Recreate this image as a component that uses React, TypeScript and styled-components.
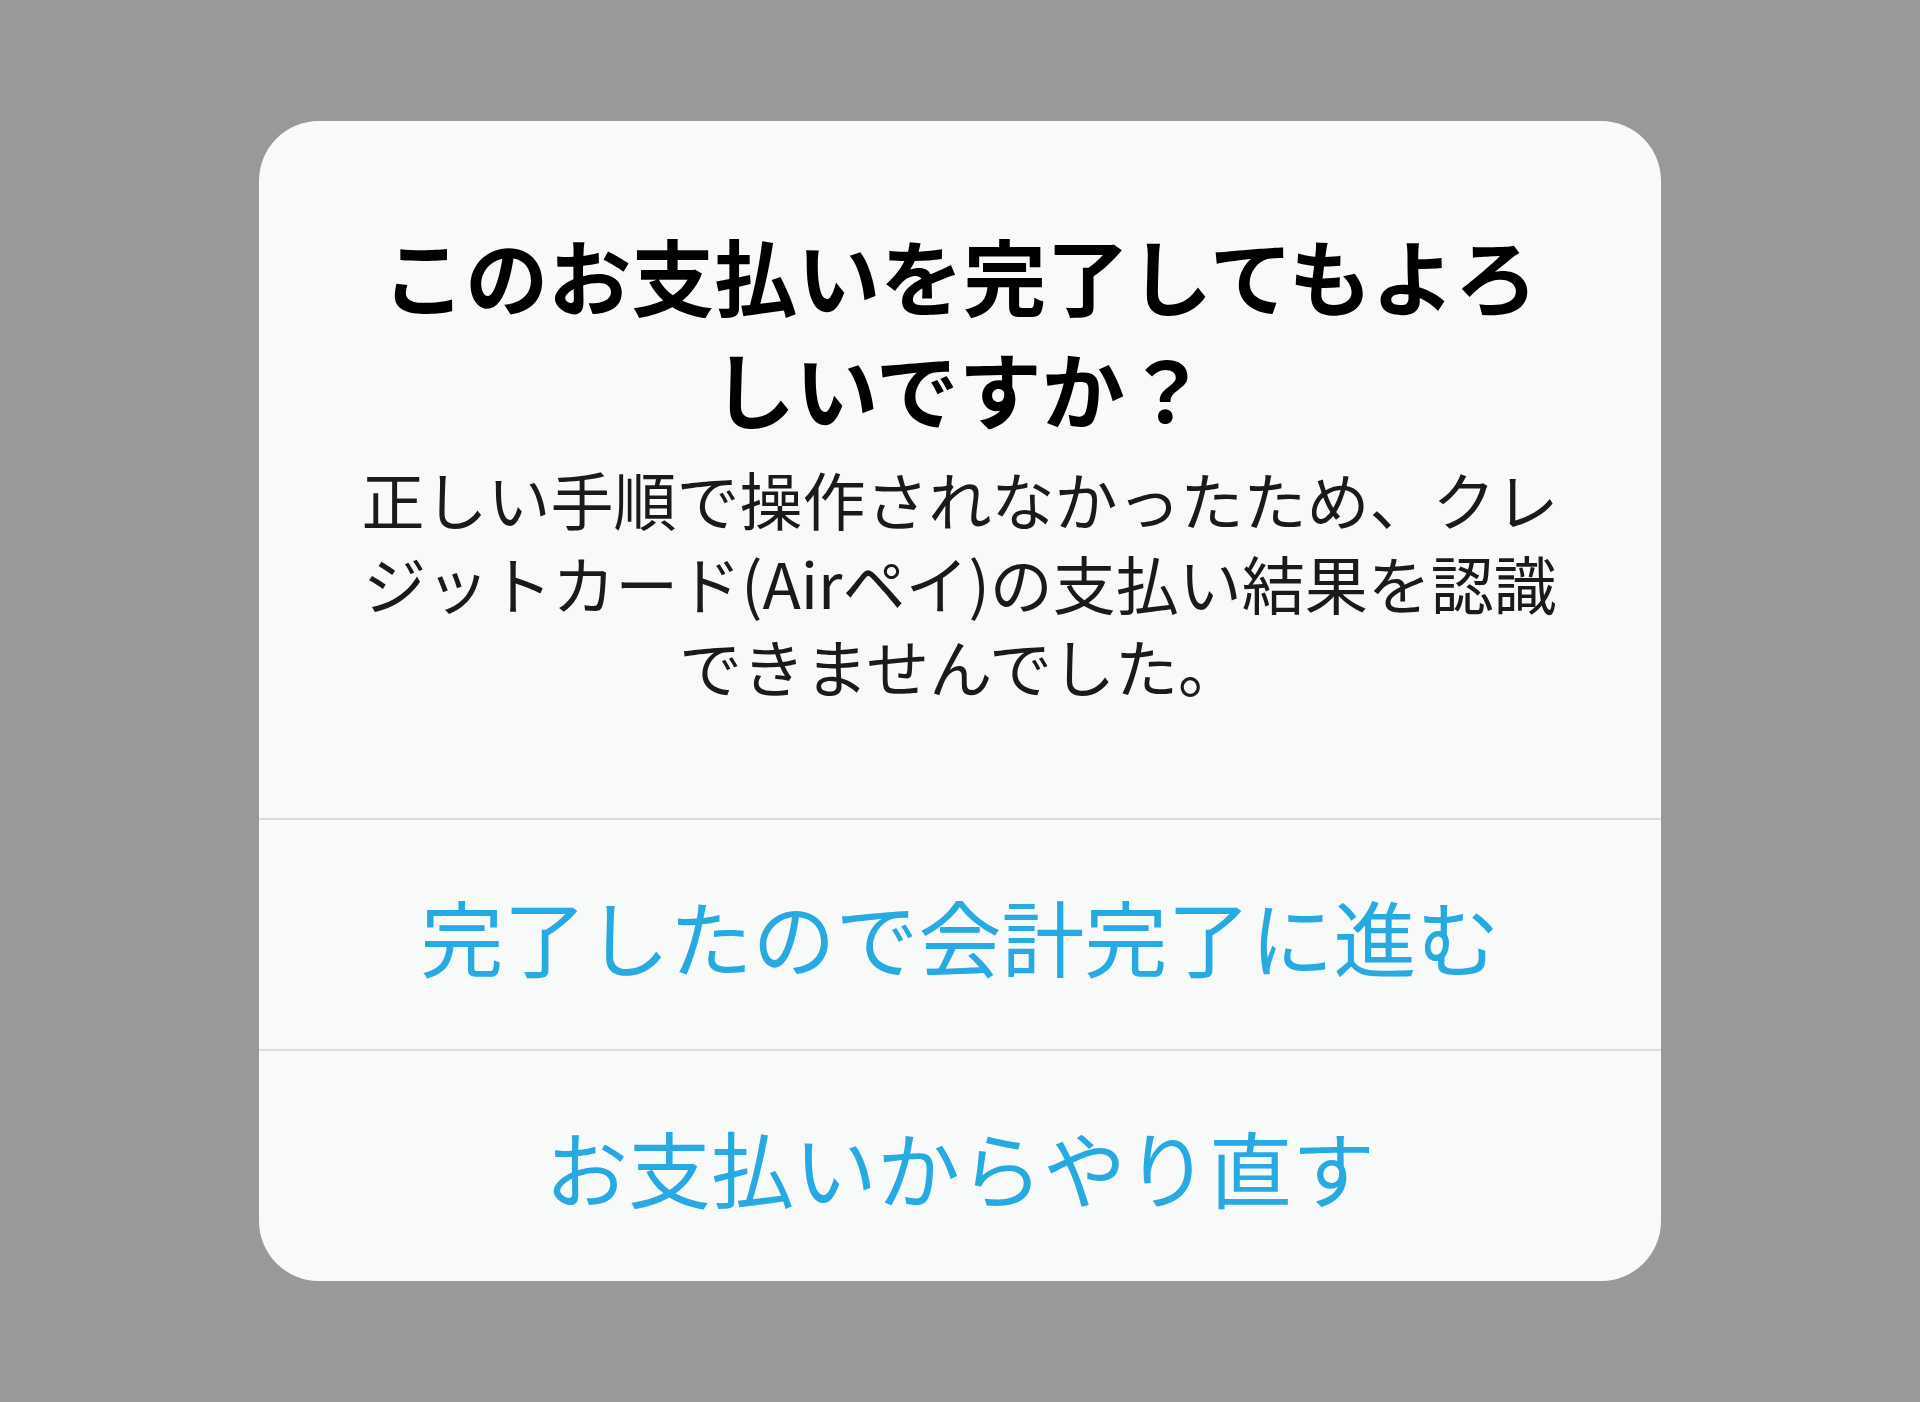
import styled, { createGlobalStyle } from 'styled-components'

const GlobalStyle = createGlobalStyle`
  html, body {
    margin: 0;
    padding: 0;
    background: #999999;
  }
  body {
    font-family: "Noto Sans CJK JP", "Noto Sans", sans-serif;
  }
`

function App() {
  return (
    <>
      <GlobalStyle />
      <Backdrop>
        <Alert role="alertdialog">
          <AlertBody>
            <Title>
              このお支払いを完了してもよろ
              <br />
              しいですか？
            </Title>
            <Message>
              正しい手順で操作されなかったため、クレ
              <br />
              ジットカード(Airペイ)の支払い結果を認識
              <br />
              できませんでした。
            </Message>
          </AlertBody>
          <ActionButton type="button">完了したので会計完了に進む</ActionButton>
          <ActionButton type="button">お支払いからやり直す</ActionButton>
        </Alert>
      </Backdrop>
    </>
  )
}

export default App

const Backdrop = styled.div`
  display: flex;
  align-items: center;
  justify-content: center;
  min-height: 100vh;
  background: #999999;
`
const Alert = styled.div`
  width: 1402px;
  height: 1160px;
  display: flex;
  flex-direction: column;
  background: #f8f9f9;
  border-radius: 60px;
  overflow: hidden;
`
const AlertBody = styled.div`
  height: 697px;
  box-sizing: border-box;
  padding: 97px 60px 0;
  display: flex;
  flex-direction: column;
  align-items: center;
  text-align: center;
`
const Title = styled.h2`
  margin: 0;
  font-size: 83px;
  font-weight: 700;
  line-height: 113px;
  color: #000000;
  white-space: nowrap;
`
const Message = styled.p`
  margin: 12px 0 0;
  font-size: 63px;
  font-weight: 400;
  line-height: 83.5px;
  color: #1a1a1a;
  white-space: nowrap;
`
const ActionButton = styled.button`
  height: 231px;
  border: none;
  border-top: 2px solid #dadcdf;
  background: transparent;
  font-family: inherit;
  font-size: 83px;
  font-weight: 400;
  color: #27a9e1;
  padding: 0;
  cursor: pointer;
`
